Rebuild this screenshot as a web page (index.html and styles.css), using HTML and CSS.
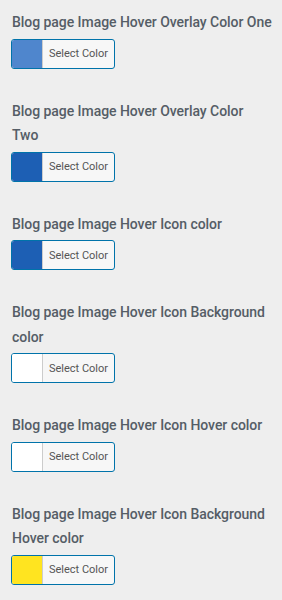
FILE: index.html
```html
<!DOCTYPE html>
<html>
<head>
<meta charset="utf-8">
<link rel="stylesheet" href="styles.css">
</head>
<body>
<ul class="controls">
  <li class="control">
    <span class="title">Blog page Image Hover Overlay Color One</span>
    <button class="picker"><span class="swatch swatch-light-blue"></span><span class="label">Select Color</span></button>
  </li>
  <li class="control">
    <span class="title">Blog page Image Hover Overlay Color<br>Two</span>
    <button class="picker"><span class="swatch swatch-blue"></span><span class="label">Select Color</span></button>
  </li>
  <li class="control">
    <span class="title">Blog page Image Hover Icon color</span>
    <button class="picker"><span class="swatch swatch-blue"></span><span class="label">Select Color</span></button>
  </li>
  <li class="control">
    <span class="title">Blog page Image Hover Icon Background color</span>
    <button class="picker"><span class="swatch swatch-white"></span><span class="label">Select Color</span></button>
  </li>
  <li class="control">
    <span class="title">Blog page Image Hover Icon Hover color</span>
    <button class="picker"><span class="swatch swatch-white"></span><span class="label">Select Color</span></button>
  </li>
  <li class="control">
    <span class="title">Blog page Image Hover Icon Background Hover color</span>
    <button class="picker"><span class="swatch swatch-yellow"></span><span class="label">Select Color</span></button>
  </li>
</ul>
</body>
</html>
```
FILE: styles.css
```css
html, body {
  margin: 0;
  padding: 0;
  background: #eeeeee;
}
body {
  font-family: Roboto, "Liberation Sans", sans-serif;
}
.controls {
  list-style: none;
  margin: 0;
  padding: 10px 7px 0 11px;
}
.control {
  display: flex;
  flex-direction: column;
  align-items: flex-start;
  margin-bottom: 30px;
}
.title {
  font-size: 14px;
  font-weight: 500;
  line-height: 24.5px;
  color: #555d66;
  margin-bottom: 4px;
  padding-left: 1px;
  letter-spacing: -0.05px;
}
.picker {
  display: flex;
  width: 104px;
  height: 30px;
  padding: 0;
  margin: 0;
  border: 1px solid #0073aa;
  border-radius: 3px;
  overflow: hidden;
  background: #f7f7f7;
  cursor: pointer;
}
.swatch {
  width: 30px;
  height: 100%;
  border-right: 1px solid #cccccc;
  flex: none;
}
.swatch-light-blue { background: #4f86cd; }
.swatch-blue { background: #1d5fb4; }
.swatch-white { background: #ffffff; }
.swatch-yellow { background: #ffe420; }
.label {
  flex: 1;
  display: flex;
  align-items: center;
  justify-content: center;
  font-family: Roboto, "Liberation Sans", sans-serif;
  font-size: 11px;
  color: #555555;
}
```
